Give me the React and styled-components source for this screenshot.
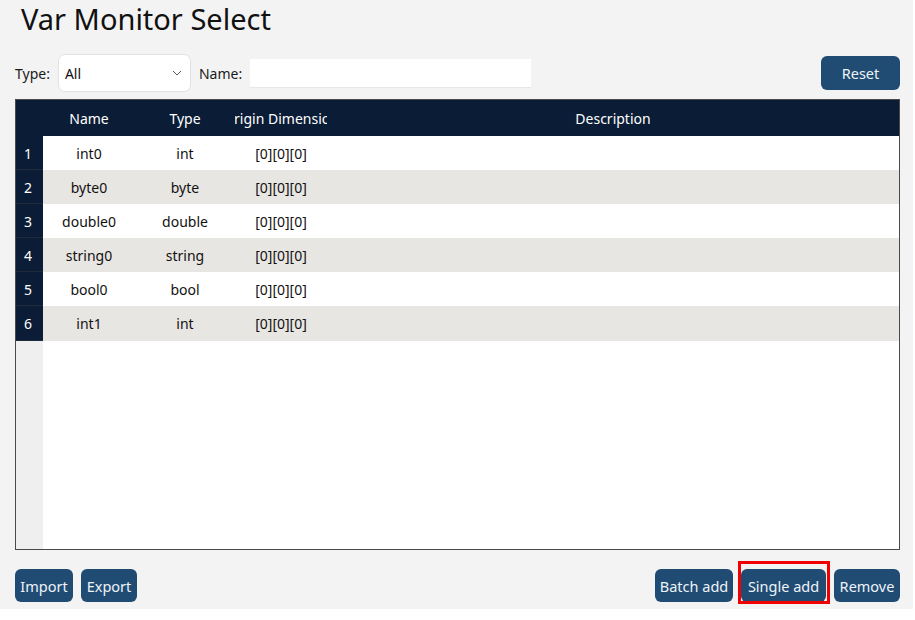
import React from "react"
import styled, { createGlobalStyle } from "styled-components"

const GlobalStyle = createGlobalStyle`
  html, body {
    margin: 0;
    padding: 0;
    background: #ffffff;
    font-family: "Noto Sans", "Open Sans", sans-serif;
  }
`

const Page = styled.div`
  width: 913px;
  height: 609px;
  background: #f3f3f3;
  display: flex;
  flex-direction: column;
  box-sizing: border-box;
  padding: 0 13px 0 15px;
`

const Title = styled.h1`
  margin: 0;
  padding-left: 6px;
  height: 42px;
  font-size: 29px;
  font-weight: 400;
  line-height: 38px;
  color: #111;
  white-space: nowrap;
`

const Toolbar = styled.div`
  display: flex;
  align-items: center;
  height: 56px;
  gap: 8px;
  margin-top: 3px;
  margin-bottom: -2px;
`

const Label = styled.span`
  font-size: 14px;
  color: #1a1a1a;
`

const Select = styled.div`
  width: 133px;
  height: 38px;
  box-sizing: border-box;
  background: #fff;
  border: 1px solid #e2e2e2;
  border-radius: 7px;
  display: flex;
  align-items: center;
  justify-content: space-between;
  padding: 0 8px 0 6px;
  font-size: 14px;
  color: #111;
`

const Input = styled.div`
  width: 281px;
  height: 29px;
  background: #fff;
  border-bottom: 1px solid #e6e6e6;
  box-sizing: border-box;
`

const Spacer = styled.div`
  flex: 1;
`

const Button = styled.button`
  width: ${(p) => p.$w}px;
  height: ${(p) => p.$h || 33}px;
  padding: 0;
  background: #204c74;
  color: #eef3f8;
  border: none;
  border-radius: 6px;
  font-family: inherit;
  font-size: 14.5px;
  white-space: nowrap;
  cursor: pointer;
`

const Table = styled.div`
  height: 449px;
  border: 1px solid #4a4a4a;
  background: #fff;
  display: flex;
  flex-direction: column;
  overflow: hidden;
`

const Row = styled.div`
  display: grid;
  grid-template-columns: 27px 92px 100px 92px 1fr;
  height: ${(p) => p.$h}px;
  background: ${(p) => p.$bg};
  color: ${(p) => p.$color || "#111"};
  font-size: 14px;
`

const Cell = styled.div`
  display: flex;
  align-items: center;
  justify-content: center;
  overflow: hidden;
  white-space: nowrap;
`

const IndexCell = styled.div`
  background: #0b1d36;
  color: #fff;
  display: flex;
  align-items: center;
  padding-left: 8px;
  font-size: 14px;
  box-shadow: inset 0 -1px 0 #1f2b3a;
`

const Filler = styled.div`
  flex: 1;
  display: grid;
  grid-template-columns: 27px 1fr;
`

const FillerIndex = styled.div`
  background: #efefef;
`

const Footer = styled.div`
  display: flex;
  align-items: center;
  gap: 8px;
  margin-top: 19px;
`

const Highlight = styled.div`
  position: relative;
  &::after {
    content: "";
    position: absolute;
    left: -3px;
    right: -4px;
    top: -8px;
    bottom: -2px;
    border: 3px solid #f00000;
    pointer-events: none;
  }
`

const rows = [
  ["int0", "int"],
  ["byte0", "byte"],
  ["double0", "double"],
  ["string0", "string"],
  ["bool0", "bool"],
  ["int1", "int"],
]

const ChevronDown = () => (
  <svg width="10" height="6" viewBox="0 0 10 6" fill="none">
    <path d="M1 1l4 4 4-4" stroke="#555" strokeWidth="1" />
  </svg>
)

const App = () => (
  <>
    <GlobalStyle />
    <Page>
      <Title>Var Monitor Select</Title>
      <Toolbar>
        <Label>Type:</Label>
        <Select>
          <span>All</span>
          <ChevronDown />
        </Select>
        <Label>Name:</Label>
        <Input />
        <Spacer />
        <Button $w={79} $h={34}>Reset</Button>
      </Toolbar>
      <Table>
        <Row $h={36} $bg="#0b1d36" $color="#fff">
          <Cell />
          <Cell>Name</Cell>
          <Cell>Type</Cell>
          <Cell>Origin Dimension</Cell>
          <Cell>Description</Cell>
        </Row>
        {rows.map(([name, type], i) => (
          <Row key={name} $h={i === 5 ? 35 : 34} $bg={i % 2 ? "#e8e6e2" : "#ffffff"}>
            <IndexCell>{i + 1}</IndexCell>
            <Cell>{name}</Cell>
            <Cell>{type}</Cell>
            <Cell>[0][0][0]</Cell>
            <Cell />
          </Row>
        ))}
        <Filler>
          <FillerIndex />
          <div />
        </Filler>
      </Table>
      <Footer>
        <Button $w={58}>Import</Button>
        <Button $w={56}>Export</Button>
        <Spacer />
        <Button $w={78}>Batch add</Button>
        <Highlight>
          <Button $w={85}>Single add</Button>
        </Highlight>
        <Button $w={66}>Remove</Button>
      </Footer>
    </Page>
  </>
)

export default App
